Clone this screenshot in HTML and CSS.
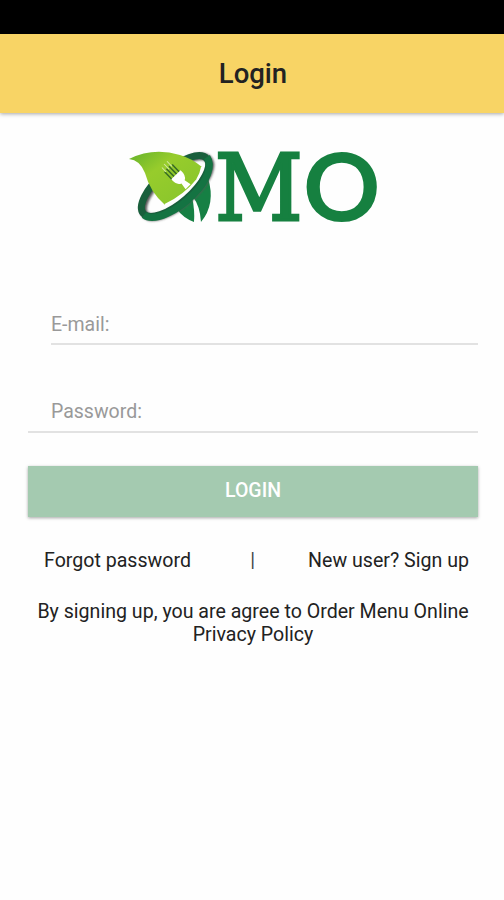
FILE: index.html
```html
<!DOCTYPE html>
<html lang="en">
  <head>
    <meta charset="UTF-8" />
    <meta name="viewport" content="width=device-width, initial-scale=1" />
    <title>Login</title>
    <link rel="stylesheet" href="styles.css">
  </head>
  <body>
    <div class="status-bar"></div>
    <header class="header">
      <h1>Login</h1>
    </header>

    <main class="content">
      <svg class="logo" viewBox="0 -20 270 130" role="img" aria-label="OMO">
        <defs>
          <linearGradient id="leafFill" x1="0" y1="0" x2="1" y2="1">
            <stop offset="0" stop-color="#64b22b" />
            <stop offset="0.35" stop-color="#97cc2c" />
            <stop offset="1" stop-color="#86c42c" />
          </linearGradient>
          <filter id="soft" x="-20%" y="-20%" width="140%" height="140%">
            <feGaussianBlur stdDeviation="1" />
          </filter>
        </defs>
        <!-- lower leaves -->
        <path class="dark-leaf" d="M56 68 L72 57 Q75 70 74 82 Q63 78 56 68 Z" />
        <path class="dark-leaf" d="M73 57 L88 38 Q96 64 81 82 Q80 66 73 57 Z" />
        <!-- ring -->
        <ellipse class="ring-shadow" cx="57" cy="47" rx="42" ry="17" transform="rotate(-41 57 47)" filter="url(#soft)" />
        <ellipse class="ring" cx="55" cy="46" rx="42" ry="17" transform="rotate(-41 55 46)" />
        <!-- big leaf over the back of the ring -->
        <path class="leaf" d="M9 19 Q33 7 60 15 Q71 18 82 27 Q81 34 77 40 Q65 55 45 65 Q30 52 25 33 Q20 20 9 19 Z" />
        <path class="leaf-edge" d="M82 27 Q81 34 77 40 Q65 55 45 65" />
        <path class="ring-front" d="M24 75 C34 83 59 70 74 54 C87 41 93 26 87 17" />
        <!-- fork -->
        <g class="fork" transform="translate(58 37) rotate(-44)">
          <path class="tines-shadow" d="M-6 -13 V-2 M-2.5 -14 V-2 M1 -14 V-2 M4.5 -13 V-2" />
          <path class="tines" d="M-5 -18 V-12 M-1 -19 V-12 M3 -19 V-12" />
          <path d="M-6.5 -3 H6.5 Q7 5 2.5 7 L4 14 H-3 L-2 7 Q-7 5 -6.5 -3 Z" />
        </g>
        <text class="letter-m" transform="translate(95 80) scale(.94 1)">M</text>
        <text class="letter-o" transform="translate(183 81) scale(1.02 1)">O</text>
      </svg>

      <form class="login-form">
        <input class="field email" type="email" placeholder="E-mail:" aria-label="E-mail" />
        <input class="field password" type="password" placeholder="Password:" aria-label="Password" />
        <button class="login-button" type="submit">LOGIN</button>
      </form>

      <div class="links">
        <a href="#">Forgot password</a>
        <span>|</span>
        <a href="#">New user? Sign up</a>
      </div>
      <p class="terms">By signing up, you are agree to Order Menu Online<br />Privacy Policy</p>
    </main>
  </body>
</html>
```
FILE: styles.css
```css
* {
  box-sizing: border-box;
}
body {
  margin: 0;
  background-color: #fefefe;
  font-family: Roboto, "Liberation Sans", sans-serif;
  color: #222;
}
.status-bar {
  height: 34px;
  background-color: #000;
}
.header {
  height: 79px;
  display: flex;
  align-items: center;
  justify-content: center;
  background-color: #f8d465;
  box-shadow: 0 1px 4px rgba(0, 0, 0, 0.35);
}
.header h1 {
  margin: 0 0 0 2px;
  font-size: 27.5px;
  font-weight: 500;
  line-height: 32px;
}
.content {
  display: flex;
  flex-direction: column;
  padding: 7px 26px 0 28px;
}

/* logo */
.logo {
  width: 270px;
  height: 130px;
  margin-left: 92px;
}
.dark-leaf {
  fill: #168044;
}
.ring-shadow {
  fill: none;
  stroke: #555;
  stroke-width: 7;
}
.ring {
  fill: none;
  stroke: #195f3c;
  stroke-width: 7;
}
.ring-front {
  fill: none;
  stroke: #147342;
  stroke-width: 7;
}
.leaf {
  fill: url(#leafFill);
}
.leaf-edge {
  fill: none;
  stroke: #fff;
  stroke-width: 2;
}
.fork {
  fill: #fff;
}
.tines {
  stroke: #d5e9a8;
  stroke-width: 1;
}
.tines-shadow {
  stroke: #376b25;
  stroke-width: 1.5;
}
.letter-m {
  font-family: "DejaVu Serif", serif;
  font-size: 91px;
  fill: #168040;
  stroke: #168040;
  stroke-width: 3;
}
.letter-o {
  font-family: Lato, sans-serif;
  font-size: 94px;
  font-weight: 700;
  fill: #168040;
}

/* form */
.login-form {
  display: flex;
  flex-direction: column;
  margin-top: 54px;
}
.field {
  height: 41px;
  padding: 0;
  border: none;
  border-bottom: 2px solid #e2e2e2;
  background: none;
  font-family: inherit;
  font-size: 19.5px;
  outline: none;
}
.field::placeholder {
  color: #999;
  opacity: 1;
}
.email {
  margin-left: 23px;
  padding-top: 2px;
}
.password {
  margin-top: 47px;
  padding-left: 23px;
}
.login-button {
  height: 51px;
  margin-top: 33px;
  padding: 0 0 2px;
  border: none;
  background-color: #a4cab0;
  box-shadow: 0 1px 3px rgba(0, 0, 0, 0.35);
  color: #fff;
  font-family: inherit;
  font-size: 19.5px;
  font-weight: 500;
}

/* footer text */
.links {
  display: flex;
  justify-content: space-between;
  margin-top: 32px;
  padding: 0 9px 0 16px;
  font-size: 19.6px;
  line-height: 23px;
}
.links a {
  color: inherit;
  text-decoration: none;
}
.links span {
  padding-left: 6px;
  color: #444;
}
.terms {
  margin: 28px 0 0;
  font-size: 19.6px;
  line-height: 23px;
  text-align: center;
  white-space: nowrap;
}
```
